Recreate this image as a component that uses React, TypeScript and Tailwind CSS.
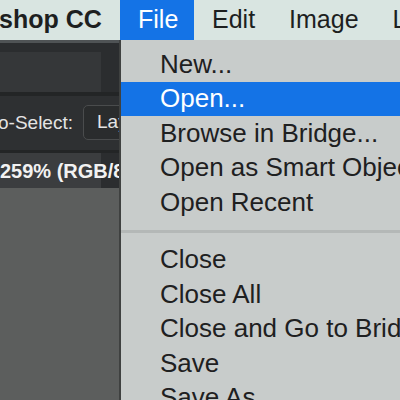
import React from "react";

const fileItems = [
  "New...",
  "Open...",
  "Browse in Bridge...",
  "Open as Smart Object...",
  "Open Recent",
  "-",
  "Close",
  "Close All",
  "Close and Go to Bridge...",
  "Save",
  "Save As...",
];

const App: React.FC = () => {
  return (
    <div className="w-[400px] h-[400px] overflow-hidden flex flex-col font-['Liberation_Sans',Arial,sans-serif] bg-[#5d5f5e]">
      {/* menu bar */}
      <div className="h-[40px] shrink-0 bg-[#d9e5e1] flex items-center text-[25px] text-[#1d1f1f] whitespace-nowrap overflow-hidden">
        <div className="w-[121px] shrink-0 font-bold -ml-[1px]">shop CC</div>
        <div className="h-full w-[74px] shrink-0 bg-[#1473e6] text-white flex items-center pl-[18px]">File</div>
        <div className="ml-[18px] shrink-0">Edit</div>
        <div className="ml-[34px] shrink-0">Image</div>
        <div className="ml-[34px] shrink-0">Layer</div>
      </div>

      <div className="flex flex-1 min-h-0">
        {/* photoshop workspace peeking out */}
        <div className="w-[119px] shrink-0 flex flex-col bg-[#2b2d2f]">
          <div className="h-[3px] bg-[#4f5355]" />
          <div className="h-[9px]" />
          <div className="h-[40px] flex">
            <div className="w-[101px] bg-[#353739]" />
          </div>
          <div className="h-[4px] bg-[#232526]" />
          <div className="h-[54px] flex items-center relative overflow-hidden bg-[#2e3032]">
            <span className="text-[19px] text-[#e4e4e4] whitespace-nowrap -ml-[2px]">o-Select:</span>
            <div className="absolute left-[83px] top-[9px] h-[35px] w-[60px] rounded-[5px] border border-[#4a4c4d] bg-[#2a2c2d] flex items-center pl-[13px] text-[19px] text-[#e4e4e4]">
              Layer
            </div>
          </div>
          <div className="h-[3px] bg-[#232526]" />
          <div className="h-[35px] flex overflow-hidden">
            <div className="w-[101px] shrink-0 bg-[#3b3d3f] flex items-center text-[20px] font-bold text-[#f2f2f2] whitespace-nowrap -mr-[30px] z-10">
              259% (RGB/8)
            </div>
          </div>
          <div className="flex-1 bg-[#5c5e5d]" />
        </div>
        <div className="w-[2px] shrink-0 bg-[#3f4140]" />

        {/* file menu */}
        <div className="flex-1 bg-[#c8cccb] pt-[7px] text-[26px] text-[#1e2021] whitespace-nowrap overflow-hidden">
          {fileItems.map((item, i) =>
            item === "-" ? (
              <div key={i} className="h-[23px] flex items-center">
                <div className="h-[3px] w-full bg-[#b4b8b7]" />
              </div>
            ) : (
              <div
                key={i}
                className={`h-[34.5px] flex items-center pl-[39px] ${
                  item === "Open..." ? "bg-[#1473e6] text-white" : ""
                }`}
              >
                {item}
              </div>
            )
          )}
        </div>
      </div>
    </div>
  );
};

export default App;
